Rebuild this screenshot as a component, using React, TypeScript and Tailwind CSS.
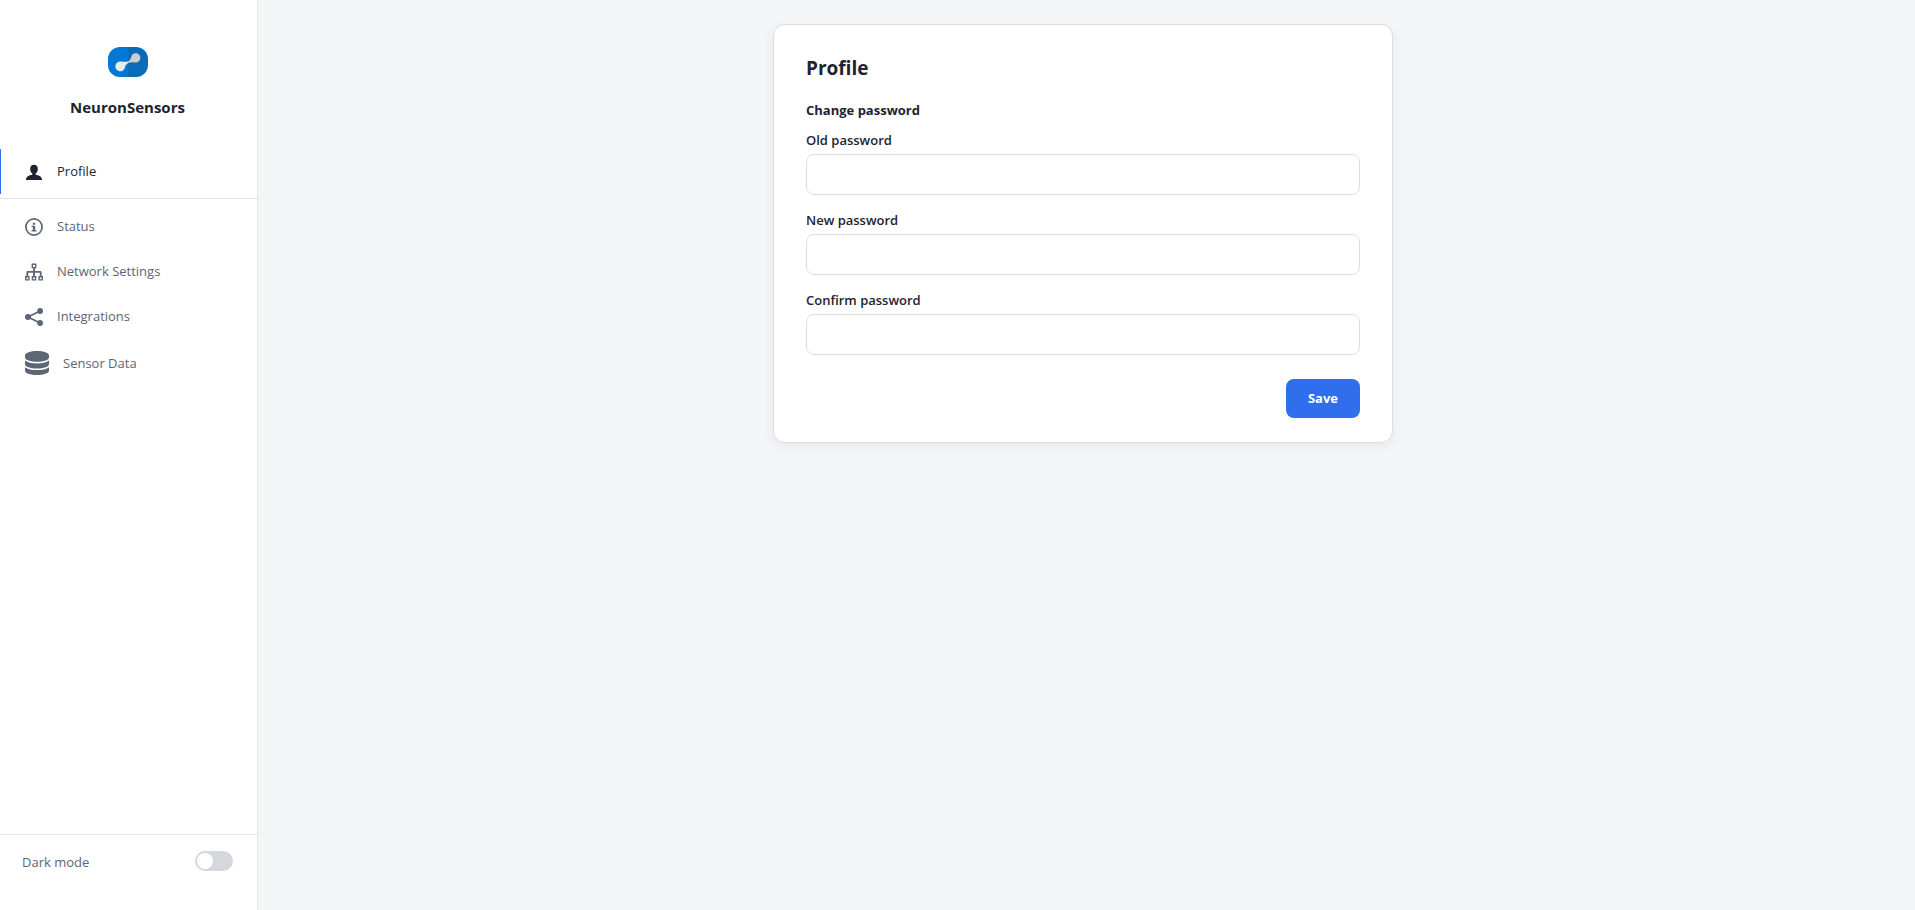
import React, { useState } from 'react';

interface NavItem {
  label: string;
  href: string;
  icon: React.ReactNode;
}

const UserIcon = () => (
  <svg viewBox="0 0 18 18" fill="currentColor" className="size-[18px]" aria-hidden="true">
    <path d="M9 1.800c2.400 0 3.800 1.400 3.800 4.100 0 1.900-.8 3.800-2.100 4.700v1.200c3.300.5 6.300 2 6.300 4.700v.5H1v-.5c0-2.700 3-4.200 6.300-4.700v-1.200C6 9.700 5.200 7.800 5.200 5.900 5.200 3.200 6.600 1.800 9 1.800Z" />
  </svg>
);

const InfoIcon = () => (
  <svg viewBox="0 0 18 18" fill="none" className="size-[18px]" aria-hidden="true">
    <circle cx="9" cy="9" r="8.100" stroke="currentColor" strokeWidth="1.700" />
    <path d="M7.800 4.700h2.400v2H7.800zM6.600 7.700h3.600v4.500h1.300v1.300h-5v-1.300h1.300V9H6.600z" fill="currentColor" />
  </svg>
);

const NetworkIcon = () => (
  <svg viewBox="0 0 18 18" fill="none" stroke="currentColor" strokeWidth="1.400" className="size-[18px]" aria-hidden="true">
    <path d="M7.300 1.200h3.400v3.400H7.300zM.7 13.700h3.200v3.200H.7zM7.400 13.700h3.200v3.200H7.400zM14.100 13.700h3.200v3.200h-3.200z" />
    <path d="M9 4.600v9M2.300 13.700V9.300a.5.5 0 0 1 .5-.5h12.400a.5.5 0 0 1 .5.5v4.400" strokeWidth="1.800" />
  </svg>
);

const ShareIcon = () => (
  <svg viewBox="0 0 18 18" fill="currentColor" className="size-[18px]" aria-hidden="true">
    <path d="M15 3 3 9l12 6" fill="none" stroke="currentColor" strokeWidth="1.700" />
    <circle cx="3" cy="9" r="3" />
    <circle cx="15.100" cy="3" r="2.900" />
    <circle cx="15.100" cy="15" r="2.900" />
  </svg>
);

const DatabaseIcon = () => (
  <svg viewBox="0 0 24 24" fill="currentColor" className="size-6" aria-hidden="true">
    <path d="M12 0c6.600 0 12 1.900 12 4.300v2.200c0 2.400-5.400 4.300-12 4.300S0 8.900 0 6.500V4.300C0 1.900 5.400 0 12 0Z" />
    <path d="M0 9.500c2.300 1.900 7 2.900 12 2.900s9.700-1 12-2.900v3.700c0 2.400-5.400 4.300-12 4.300S0 15.600 0 13.200Z" />
    <path d="M0 16.200c2.300 1.900 7 2.900 12 2.900s9.700-1 12-2.900v3.500c0 2.400-5.400 4.300-12 4.300S0 22.100 0 19.700Z" />
  </svg>
);

const Logo = () => (
  <svg viewBox="0 0 40 30" className="h-[30px] w-10" aria-hidden="true">
    <path d="M12 0h8v30h-8A12 12 0 0 1 0 18v-6A12 12 0 0 1 12 0Z" fill="#0078d4" />
    <path d="M20 0h8a12 12 0 0 1 12 12v6a12 12 0 0 1-12 12h-8Z" fill="#086cb8" />
    <path d="M20 14.400c-2.400.7-4.600.4-7.200.1A4.900 4.900 0 1 0 17 20.300c.6-2 1.400-3 3-4.200Z" fill="#e9eaec" />
    <path d="M20 14.400c2-1.200 2.700-2.400 3.200-4.300a4.600 4.600 0 1 1 4 5.300c-2.900-.4-4.900-.4-7.200.7Z" fill="#cbcdd0" />
  </svg>
);

const navItems: NavItem[] = [
  { label: 'Status', href: '#status', icon: <InfoIcon /> },
  { label: 'Network Settings', href: '#network', icon: <NetworkIcon /> },
  { label: 'Integrations', href: '#integrations', icon: <ShareIcon /> },
  { label: 'Sensor Data', href: '#sensors', icon: <DatabaseIcon /> },
];

const passwordFields = [
  { id: 'old-password', label: 'Old password' },
  { id: 'new-password', label: 'New password' },
  { id: 'confirm-password', label: 'Confirm password' },
];

const NavLink: React.FC<{ item: NavItem; active?: boolean }> = ({ item, active }) => (
  <a
    href={item.href}
    className={
      active
        ? 'flex items-center gap-3.5 border-l border-[#2f6fed] py-3 pl-6 text-[#1e2330]'
        : 'flex items-center gap-3.5 border-l border-transparent py-3 pl-6 text-[#5c6675] hover:text-[#1e2330]'
    }
  >
    {item.icon}
    <span className="text-[13px] leading-[21px]">{item.label}</span>
  </a>
);

const Sidebar: React.FC = () => {
  const [dark, setDark] = useState(false);

  return (
    <aside className="flex w-[258px] shrink-0 flex-col border-r border-[#e2e4e8] bg-white">
      <div className="flex flex-col items-center gap-5 pt-[47px] pr-0.5 pb-8 text-[#1e2330]">
        <Logo />
        <span className="text-[15px] leading-5 font-bold">NeuronSensors</span>
      </div>

      <nav>
        <div className="mb-[5px] border-b border-[#e5e5e7] pb-1">
          <NavLink active item={{ label: 'Profile', href: '#profile', icon: <UserIcon /> }} />
        </div>
        {navItems.map(item => (
          <NavLink key={item.label} item={item} />
        ))}
      </nav>

      <div className="mt-auto flex items-start justify-between border-t border-[#e2e4e8] pt-4 pr-6 pb-[37px] pl-[22px]">
        <label htmlFor="dark-mode" className="text-[13px] leading-[22px] text-[#5c6675]">
          Dark mode
        </label>
        <input
          id="dark-mode"
          type="checkbox"
          role="switch"
          checked={dark}
          onChange={e => setDark(e.target.checked)}
          className="h-5 w-[38px] cursor-pointer appearance-none rounded-full bg-[#d4d7dc] p-0.5 before:block before:size-4 before:rounded-full before:bg-white checked:bg-[#2f6fed] checked:before:ml-auto"
        />
      </div>
    </aside>
  );
};

export default function App() {
  return (
    <div className="flex min-h-screen bg-[#f4f5f7] font-['Open_Sans','Noto_Sans',sans-serif]">
      <Sidebar />

      <main className="flex flex-1 items-start justify-center py-6 pr-8 pl-[25px]">
        <section className="w-full max-w-[620px] rounded-xl border border-[#dadde4] bg-white px-8 py-6 text-[#1e2330] shadow-[0_4px_12px_rgba(0,0,0,0.05)]">
          <h1 className="text-[19px] leading-[38px] font-bold">Profile</h1>

          <form className="mt-3" onSubmit={e => e.preventDefault()}>
            <h2 className="text-[13px] leading-[22px] font-bold">Change password</h2>
            <div className="mt-2.5 flex flex-col gap-4">
              {passwordFields.map(field => (
                <div key={field.id}>
                  <label htmlFor={field.id} className="mb-1 block text-[13px] leading-[19px] font-semibold">
                    {field.label}
                  </label>
                  <input
                    id={field.id}
                    type="password"
                    className="block h-[41px] w-full rounded-lg border border-[#dadde4] bg-white px-3 text-sm outline-none focus:border-[#2f6fed]"
                  />
                </div>
              ))}
            </div>
            <div className="mt-6 flex justify-end">
              <button type="submit" className="min-w-[74px] rounded-lg bg-[#2f6fed] px-5 py-2.5 text-[13px] leading-[19px] font-bold text-white">
                Save
              </button>
            </div>
          </form>
        </section>
      </main>
    </div>
  );
}
